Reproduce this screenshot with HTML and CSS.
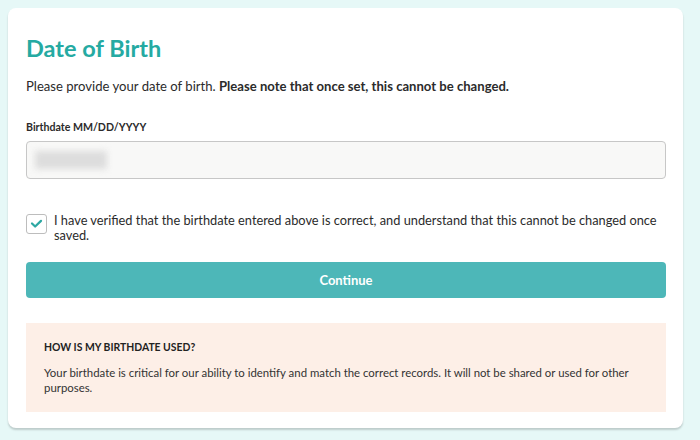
FILE: index.html
```html
<!DOCTYPE html>
<html lang="en">
<head>
<meta charset="utf-8">
<title>Date of Birth</title>
<link rel="stylesheet" href="styles.css">
</head>
<body>
<main class="card">
  <h1 class="title">Date of Birth</h1>
  <p class="intro">Please provide your date of birth. <strong>Please note that once set, this cannot be changed.</strong></p>
  <label class="field-label" for="dob">Birthdate MM/DD/YYYY</label>
  <div class="input" id="dob">
    <span class="blur-value"></span>
  </div>
  <label class="check-row">
    <span class="checkbox">
      <svg viewBox="0 0 20 20" width="15" height="15" aria-hidden="true"><path d="M4 10 L8.2 14 L16 6.5" fill="none" stroke="#2ea8a3" stroke-width="3" stroke-linecap="round" stroke-linejoin="round"/></svg>
    </span>
    <span class="check-text">I have verified that the birthdate entered above is correct, and understand that this cannot be changed once saved.</span>
  </label>
  <button class="btn" type="button">Continue</button>
  <section class="info">
    <h2 class="info-title">HOW IS MY BIRTHDATE USED?</h2>
    <p class="info-text">Your birthdate is critical for our ability to identify and match the correct records. It will not be shared or used for other purposes.</p>
  </section>
</main>
</body>
</html>
```
FILE: styles.css
```css
html, body {
  margin: 0;
  padding: 0;
}
body {
  background: #e6f8f7;
  font-family: Lato, "Open Sans", sans-serif;
  color: #2b2b2b;
  padding: 8px 17px 12px 8px;
  width: 675px;
  height: 420px;
}
.card {
  background: #ffffff;
  border-radius: 8px;
  box-shadow: 0 2px 2px rgba(0, 0, 0, 0.18);
  padding: 26px 17px 16px 18px;
  height: 420px;
  box-sizing: border-box;
  display: flex;
  flex-direction: column;
}
.title {
  margin: 0;
  font-size: 23.5px;
  line-height: 28px;
  font-weight: 700;
  color: #25aaa2;
}
.intro {
  margin: 15px 0 0;
  font-size: 13.1px;
  line-height: 18px;
}
.intro strong {
  font-weight: 700;
}
.field-label {
  margin-top: 25px;
  font-size: 10.6px;
  line-height: 14px;
  font-weight: 700;
}
.input {
  margin-top: 7px;
  height: 40px;
  box-sizing: border-box;
  border: 1px solid #c7c7c7;
  border-radius: 4px;
  background: #f8f8f7;
  display: flex;
  align-items: center;
  padding-left: 8px;
}
.blur-value {
  display: block;
  width: 72px;
  height: 18px;
  background: #dddddd;
  filter: blur(3px);
}
.check-row {
  margin-top: 34px;
  display: flex;
  gap: 7px;
  align-items: flex-start;
}
.checkbox {
  flex: none;
  width: 21px;
  height: 20px;
  box-sizing: border-box;
  border: 1px solid #bdbdbd;
  border-radius: 3px;
  background: #fff;
  display: flex;
  align-items: center;
  justify-content: center;
  margin-top: 1px;
}
.check-text {
  font-size: 12.8px;
  line-height: 15px;
}
.btn {
  margin-top: 19px;
  height: 38px;
  border: none;
  border-radius: 4px;
  background: #4db7b8;
  color: #ffffff;
  font-family: inherit;
  font-size: 13px;
  font-weight: 700;
}
.info {
  margin-top: 25px;
  background: #fdefe7;
  padding: 17px 18px 17px;
}
.info-title {
  margin: 0;
  font-size: 10.4px;
  line-height: 14px;
  font-weight: 700;
  color: #222;
}
.info-text {
  margin: 11px 0 0;
  font-size: 11.4px;
  line-height: 15px;
  color: #333;
}
```
